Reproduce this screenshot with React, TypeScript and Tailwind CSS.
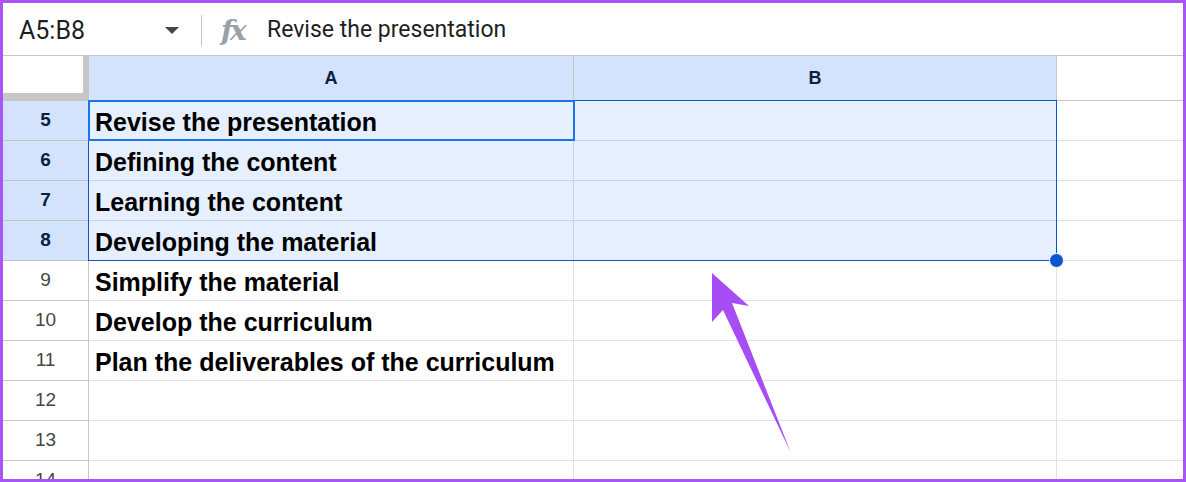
import React from 'react';

const rows = [
  { n: 5, text: 'Revise the presentation', sel: true },
  { n: 6, text: 'Defining the content', sel: true },
  { n: 7, text: 'Learning the content', sel: true },
  { n: 8, text: 'Developing the material', sel: true },
  { n: 9, text: 'Simplify the material', sel: false },
  { n: 10, text: 'Develop the curriculum', sel: false },
  { n: 11, text: 'Plan the deliverables of the curriculum', sel: false },
  { n: 12, text: '', sel: false },
  { n: 13, text: '', sel: false },
  { n: 14, text: '', sel: false },
];

const App = () => {
  return (
    <div className="relative w-[1186px] h-[482px] overflow-hidden bg-white border-[3px] border-[#a855f7] font-['Roboto',sans-serif]">
      {/* formula bar */}
      <div className="flex items-center h-[53px] pt-[3px] border-b border-[#c4c7c5]">
        <div className="w-[159px] pl-[16px] text-[25px] text-[#1f1f1f]">A5:B8</div>
        <svg width="14" height="8" viewBox="0 0 14 8" className="ml-[3px]">
          <path d="M0 0 L14 0 L7 7 Z" fill="#444746" />
        </svg>
        <div className="ml-[22px] w-px h-[31px] bg-[#c4c7c5]" />
        <div className="ml-[19px] w-[30px] text-[28px] italic font-semibold text-[#9aa0a6] font-['DejaVu_Serif',serif] leading-none tracking-[-3px]">fx</div>
        <div className="ml-[16px] text-[23px] text-[#1f1f1f]">Revise the presentation</div>
      </div>

      {/* column headers */}
      <div className="flex h-[45px] border-b border-[#c4c7c5]">
        <div className="w-[86px] shrink-0 bg-white border-r-[6px] border-b-[7px] border-[#c6c6c6]" />
        <div className="w-[485px] shrink-0 flex items-center justify-center bg-[#d3e3fd] border-r border-[#c4c7c5] text-[18px] font-bold text-[#0b1f3f] font-['Liberation_Sans',sans-serif]">A</div>
        <div className="w-[483px] shrink-0 flex items-center justify-center bg-[#d3e3fd] border-r border-[#c4c7c5] text-[18px] font-bold text-[#0b1f3f] font-['Liberation_Sans',sans-serif]">B</div>
        <div className="flex-1" />
      </div>

      {/* rows */}
      <div className="relative">
        {rows.map((r) => (
          <div key={r.n} className="flex h-[40px]">
            <div
              className={
                r.sel
                  ? 'w-[86px] shrink-0 flex items-center justify-center bg-[#d3e3fd] border-r border-b border-[#c4c7c5] text-[19px] font-bold text-[#0b1f3f] font-["Liberation_Sans",sans-serif]'
                  : 'w-[86px] shrink-0 flex items-center justify-center bg-white border-r border-b border-[#c4c7c5] text-[19px] text-[#444746] font-["Liberation_Sans",sans-serif]'
              }
            >
              {r.n}
            </div>
            <div
              className={
                r.sel
                  ? 'w-[485px] shrink-0 flex items-center pl-[6px] pt-[4px] bg-[#e6effd] border-r border-b border-[#c9d2de] text-[25px] font-bold text-black whitespace-nowrap font-["Liberation_Sans",sans-serif]'
                  : 'w-[485px] shrink-0 flex items-center pl-[6px] pt-[4px] bg-white border-r border-b border-[#e1e1e1] text-[25px] font-bold text-black whitespace-nowrap font-["Liberation_Sans",sans-serif]'
              }
            >
              {r.text}
            </div>
            <div
              className={
                r.sel
                  ? 'w-[483px] shrink-0 bg-[#e6effd] border-r border-b border-[#c9d2de]'
                  : 'w-[483px] shrink-0 bg-white border-r border-b border-[#e1e1e1]'
              }
            />
            <div className="flex-1 border-b border-[#e1e1e1]" />
          </div>
        ))}

        {/* selection range outline */}
        <div className="absolute left-[85px] top-[-1px] w-[969px] h-[161px] border border-[#0b57d0] pointer-events-none" />
        {/* active cell */}
        <div className="absolute left-[85px] top-[-1px] w-[487px] h-[41px] border-2 border-[#1a73e8] pointer-events-none" />
        {/* fill handle */}
        <div className="absolute left-[1046px] top-[152px] w-[15px] h-[15px] rounded-full bg-[#0b57d0] border border-white" />
      </div>

      {/* annotation arrow */}
      <svg className="absolute left-[-3px] top-[-3px] pointer-events-none" width="1186" height="482" viewBox="0 0 1186 482">
        <polygon points="712,273 749,306 732,303 791,453 723,310 712,322" fill="#a64df5" />
      </svg>
    </div>
  );
};

export default App;
